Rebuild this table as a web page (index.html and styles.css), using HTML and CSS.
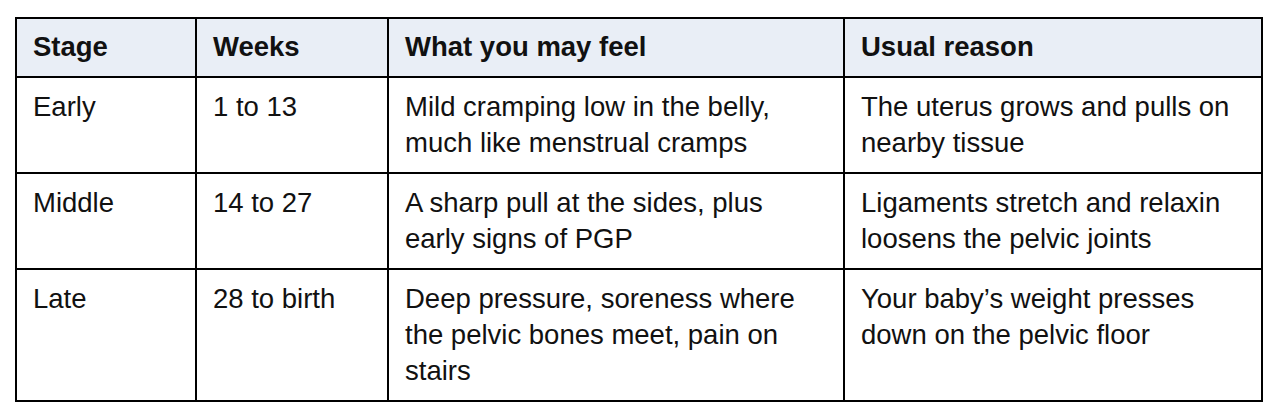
FILE: index.html
```html
<!DOCTYPE html>
<html lang="en">
<head>
<meta charset="utf-8">
<title>Pelvic pain by stage</title>
<link rel="stylesheet" href="styles.css">
</head>
<body>
<table class="stages">
  <colgroup>
    <col class="c-stage">
    <col class="c-weeks">
    <col class="c-feel">
    <col class="c-reason">
  </colgroup>
  <thead>
    <tr>
      <th>Stage</th>
      <th>Weeks</th>
      <th>What you may feel</th>
      <th>Usual reason</th>
    </tr>
  </thead>
  <tbody>
    <tr>
      <td>Early</td>
      <td>1 to 13</td>
      <td>Mild cramping low in the belly, much like menstrual cramps</td>
      <td>The uterus grows and pulls on nearby tissue</td>
    </tr>
    <tr>
      <td>Middle</td>
      <td>14 to 27</td>
      <td>A sharp pull at the sides, plus early signs of PGP</td>
      <td>Ligaments stretch and relaxin loosens the pelvic joints</td>
    </tr>
    <tr>
      <td>Late</td>
      <td>28 to birth</td>
      <td>Deep pressure, soreness where the pelvic bones meet, pain on stairs</td>
      <td>Your baby’s weight presses down on the pelvic floor</td>
    </tr>
  </tbody>
</table>
</body>
</html>
```
FILE: styles.css
```css
html, body {
  margin: 0;
  padding: 0;
  background: #ffffff;
}

body {
  padding: 17px 0 0 15px;
  font-family: "Liberation Sans", Arial, sans-serif;
  color: #111111;
}

.stages {
  width: 1248px;
  table-layout: fixed;
  border-collapse: separate;
  border-spacing: 0;
  border-top: 2px solid #000;
  border-left: 2px solid #000;
  font-size: 27.5px;
  line-height: 36px;
}

.c-stage { width: 180px; }
.c-weeks { width: 192px; }
.c-feel { width: 456px; }
.c-reason { width: 418px; }

.stages th,
.stages td {
  border-right: 2px solid #000;
  border-bottom: 2px solid #000;
  padding: 11px 16px;
  text-align: left;
  vertical-align: top;
}

.stages th {
  background: #e9eef6;
  font-weight: bold;
  padding: 10px 16px 11px;
}
```
